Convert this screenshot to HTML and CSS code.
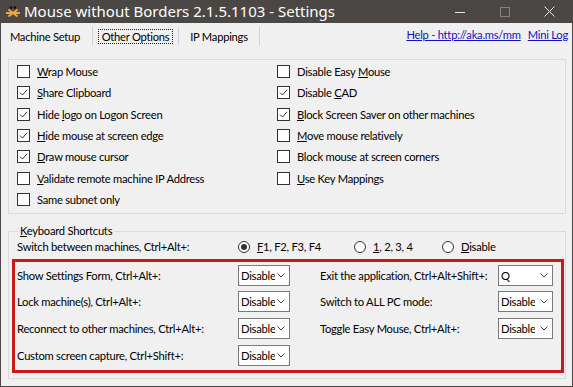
FILE: index.html
```html
<!DOCTYPE html>
<html>
<head>
    <title>Mouse without Borders - Settings</title>
    <!-- Styling with CSS -->
    <link rel="stylesheet" href="styles.css">
</head>
<body>
  <div class="window">
    <!-------------------------- Title Bar ------------------------>
    <div class="titlebar">
      <svg class="app-icon" viewBox="0 0 16 12" width="16" height="12">
        <circle cx="6" cy="1.6" r="1.3" fill="#111"/>
        <circle cx="10" cy="1.6" r="1.3" fill="#111"/>
        <path d="M1 7H15M3.5 3.5L12.5 10.5M12.5 3.5L3.5 10.5" stroke="#f3a43a" stroke-width="2" fill="none"/>
      </svg>
      <span class="title">Mouse without Borders 2.1.5.1103 - Settings</span>
      <div class="controls">
        <span class="ctl"><svg width="10" height="10" viewBox="0 0 10 10"><path d="M0 5.5H10" stroke="#e8e8e8"/></svg></span>
        <span class="ctl"><svg width="10" height="10" viewBox="0 0 10 10"><rect x="0.5" y="0.5" width="9" height="9" stroke="#85817e" fill="none"/></svg></span>
        <span class="ctl"><svg width="11" height="11" viewBox="0 0 11 11"><path d="M0.5 0.5L10.5 10.5M10.5 0.5L0.5 10.5" stroke="#e8e8e8"/></svg></span>
      </div>
    </div>

    <!-- Tabs and help links -->
    <div class="tabbar">
      <ul class="tabs">
        <li class="tab t1">Machine Setup</li>
        <li class="tab t2"><span class="focus">Other Options</span></li>
        <li class="tab t3">IP Mappings</li>
      </ul>
      <div class="links">
        <a href="#">Help - http://aka.ms/mm</a>
        <a href="#">Mini Log</a>
      </div>
    </div>

    <!-- Tab page -->
    <div class="page">
      <!-- Options group, two columns of checkboxes -->
      <div class="group options">
        <label class="check"><span class="box"></span><span><u>W</u>rap Mouse</span></label>
        <label class="check"><span class="box"><svg viewBox="0 0 11 11"><path d="M2 5.5L4.5 8L9 2.8" stroke="#333" fill="none"/></svg></span><span><u>S</u>hare Clipboard</span></label>
        <label class="check"><span class="box"><svg viewBox="0 0 11 11"><path d="M2 5.5L4.5 8L9 2.8" stroke="#333" fill="none"/></svg></span><span>Hide <u>l</u>ogo on Logon Screen</span></label>
        <label class="check"><span class="box"><svg viewBox="0 0 11 11"><path d="M2 5.5L4.5 8L9 2.8" stroke="#333" fill="none"/></svg></span><span><u>H</u>ide mouse at screen edge</span></label>
        <label class="check"><span class="box"><svg viewBox="0 0 11 11"><path d="M2 5.5L4.5 8L9 2.8" stroke="#333" fill="none"/></svg></span><span><u>D</u>raw mouse cursor</span></label>
        <label class="check"><span class="box"></span><span><u>V</u>alidate remote machine IP Address</span></label>
        <label class="check"><span class="box"></span><span>Same subnet only</span></label>

        <label class="check"><span class="box"></span><span>Disable Easy <u>M</u>ouse</span></label>
        <label class="check"><span class="box"><svg viewBox="0 0 11 11"><path d="M2 5.5L4.5 8L9 2.8" stroke="#333" fill="none"/></svg></span><span>Disable <u>C</u>AD</span></label>
        <label class="check"><span class="box"><svg viewBox="0 0 11 11"><path d="M2 5.5L4.5 8L9 2.8" stroke="#333" fill="none"/></svg></span><span><u>B</u>lock Screen Saver on other machines</span></label>
        <label class="check"><span class="box"></span><span><u>M</u>ove mouse relatively</span></label>
        <label class="check"><span class="box"></span><span>Block mouse at screen corners</span></label>
        <label class="check"><span class="box"></span><span><u>U</u>se Key Mappings</span></label>
      </div>

      <!-- Keyboard shortcuts group -->
      <div class="group shortcuts">
        <span class="legend"><u>K</u>eyboard Shortcuts</span>
        <div class="switch-row">
          <span class="switch-label">Switch between machines, Ctrl+Alt+:</span>
          <label class="radio r1"><span class="dot on"></span><span><u>F</u>1, F2, F3, F4</span></label>
          <label class="radio r2"><span class="dot"></span><span><u>1</u>, 2, 3, 4</span></label>
          <label class="radio"><span class="dot"></span><span><u>D</u>isable</span></label>
        </div>
        <!-- highlighted hotkeys -->
        <div class="hotkeys">
          <span>Show Settings Form, Ctrl+Alt+:</span>
          <div class="select"><span class="value">Disable</span><svg class="chev" viewBox="0 0 8 5"><path d="M0.5 0.5L4 4L7.5 0.5" stroke="#444" fill="none"/></svg></div>
          <span>Exit the application, Ctrl+Alt+Shift+:</span>
          <div class="select wide"><span class="value">Q</span><svg class="chev" viewBox="0 0 8 5"><path d="M0.5 0.5L4 4L7.5 0.5" stroke="#444" fill="none"/></svg></div>

          <span>Lock machine(s), Ctrl+Alt+:</span>
          <div class="select"><span class="value">Disable</span><svg class="chev" viewBox="0 0 8 5"><path d="M0.5 0.5L4 4L7.5 0.5" stroke="#444" fill="none"/></svg></div>
          <span>Switch to ALL PC mode:</span>
          <div class="select wide"><span class="value">Disable</span><svg class="chev" viewBox="0 0 8 5"><path d="M0.5 0.5L4 4L7.5 0.5" stroke="#444" fill="none"/></svg></div>

          <span>Reconnect to other machines, Ctrl+Alt+:</span>
          <div class="select"><span class="value">Disable</span><svg class="chev" viewBox="0 0 8 5"><path d="M0.5 0.5L4 4L7.5 0.5" stroke="#444" fill="none"/></svg></div>
          <span>Toggle Easy Mouse, Ctrl+Alt+:</span>
          <div class="select wide"><span class="value">Disable</span><svg class="chev" viewBox="0 0 8 5"><path d="M0.5 0.5L4 4L7.5 0.5" stroke="#444" fill="none"/></svg></div>

          <span>Custom screen capture, Ctrl+Shift+:</span>
          <div class="select"><span class="value">Disable</span><svg class="chev" viewBox="0 0 8 5"><path d="M0.5 0.5L4 4L7.5 0.5" stroke="#444" fill="none"/></svg></div>
        </div>
      </div>
    </div>
  </div>
</body>
</html>
```

FILE: styles.css
```css
/* Styling for the body */
* {
  box-sizing: border-box;
}

body {
  margin: 0;
  font-family: Lato, "Liberation Sans", sans-serif;
  font-size: 11.2px;
  letter-spacing: -0.25px;
  color: #000;
  background: #f0f0f0;
  white-space: nowrap;
}

/* Window frame */
.window {
  width: 573px;
  height: 387px;
  border: 1px solid #4b4744;
  border-top: none;
  display: flex;
  flex-direction: column;
}

/* Title bar */
.titlebar {
  height: 23px;
  flex: none;
  background: #4b4744;
  color: #fff;
  display: flex;
  align-items: center;
}

.app-icon {
  margin: 0 3px 0 4px;
}

.title {
  flex: 1;
  font-family: "Noto Sans", sans-serif;
  font-size: 15px;
  letter-spacing: 0;
  line-height: 23px;
}

.controls {
  display: flex;
  height: 100%;
}

.ctl {
  width: 45px;
  display: flex;
  align-items: center;
  justify-content: center;
}

/* Tab strip */
.tabbar {
  height: 22px;
  flex: none;
  display: flex;
}

.tabs {
  display: flex;
  list-style: none;
  margin: 0;
  padding: 0 0 0 1px;
}

.tab {
  margin-top: 4px;
  border-right: 1px solid #d2d2d2;
  display: flex;
  align-items: center;
  justify-content: center;
}

.t1 { width: 91px; padding-right: 4px; }
.t2 { width: 86px; }
.t3 { width: 81px; }

.focus {
  border: 1px dotted #222;
  padding: 0 3px;
  line-height: 13px;
}

.links {
  margin-left: auto;
  padding-right: 4px;
  display: flex;
  align-items: center;
  gap: 7px;
}

.links a {
  color: #1010c8;
  text-decoration: underline;
}

/* Tab page */
.page {
  flex: 1;
  padding: 14px 6px 7px 7px;
  display: flex;
  flex-direction: column;
}

.group {
  border: 1px solid #dadada;
}

/* Checkbox group */
.options {
  height: 155px;
  padding: 1px 8px 0 8px;
  display: grid;
  grid-template-columns: 260px 1fr;
  grid-template-rows: repeat(7, 21.33px);
  grid-auto-flow: column;
}

.check {
  display: flex;
  align-items: center;
  gap: 7px;
}

.box {
  width: 13px;
  height: 13px;
  border: 1px solid #333;
  background: #fff;
  display: flex;
}

.box svg {
  width: 11px;
  height: 11px;
}

/* Keyboard shortcuts group */
.shortcuts {
  height: 148px;
  margin-top: 17px;
  display: flex;
  flex-direction: column;
}

.legend {
  align-self: flex-start;
  margin: -9px 0 0 9px;
  padding: 0 2px;
  line-height: 16px;
  background: #f0f0f0;
}

.switch-row {
  height: 15px;
  padding-left: 8px;
  display: flex;
  align-items: center;
}

.switch-label {
  width: 221px;
}

.radio {
  display: flex;
  align-items: center;
  gap: 7px;
}

.r1 { width: 116px; }
.r2 { width: 88px; }

.dot {
  width: 12px;
  height: 12px;
  border: 1px solid #333;
  border-radius: 50%;
  background: #fff;
  display: flex;
  align-items: center;
  justify-content: center;
}

.dot.on::after {
  content: "";
  width: 6px;
  height: 6px;
  border-radius: 50%;
  background: #333;
}

/* Red highlight round the hotkeys */
.hotkeys {
  height: 114px;
  margin: 5px 1px 0 3px;
  border: 3px solid #c8191b;
  padding-left: 2px;
  display: grid;
  grid-template-columns: 221px 82px 178px 55px;
  grid-template-rows: repeat(4, 26.67px);
  align-items: center;
}

.select {
  width: 52px;
  height: 21px;
  border: 1px solid #7a7a7a;
  background: #fff;
  display: flex;
  align-items: center;
}

.select.wide {
  width: 55px;
}

.value {
  width: 36px;
  padding-left: 2px;
  overflow: hidden;
}

.chev {
  width: 8px;
  height: 5px;
  margin-left: auto;
  margin-right: 4px;
}
```
